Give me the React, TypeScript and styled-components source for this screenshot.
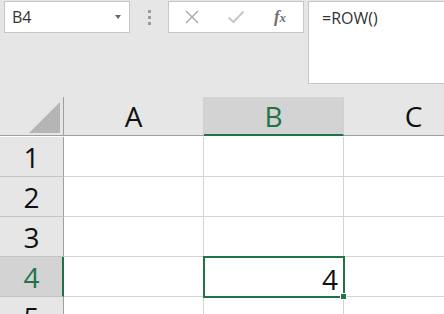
import styled, { createGlobalStyle } from 'styled-components';

const GREEN = '#217346';

const GlobalStyle = createGlobalStyle`
  html, body {
    margin: 0;
    padding: 0;
    background: #e6e6e6;
    overflow: hidden;
  }
  body {
    font-family: 'Open Sans', 'Noto Sans', sans-serif;
  }
`;

const columns = ['A', 'B', 'C'];
const rows = [1, 2, 3, 4, 5];
const activeCol = 'B';
const activeRow = 4;

export default function App() {
  return (
    <>
      <GlobalStyle />
      <Page>
        <Toolbar>
          <NameBox>
            <NameText>B4</NameText>
            <DropArrow />
          </NameBox>
          <Grip>
            <Dot />
            <Dot />
            <Dot />
          </Grip>
          <ActionBox>
            <ActionButton>
              <svg width="16" height="16" viewBox="0 0 16 16">
                <path d="M2 2L14 14M14 2L2 14" stroke="#a8a8a8" strokeWidth="1.4" fill="none" />
              </svg>
            </ActionButton>
            <ActionButton>
              <svg width="18" height="14" viewBox="0 0 18 14">
                <path d="M1.5 7.5L6.5 12L16.5 1.5" stroke="#c8c8c8" strokeWidth="2" fill="none" />
              </svg>
            </ActionButton>
            <ActionButton>
              <FxLabel>
                f<sub>x</sub>
              </FxLabel>
            </ActionButton>
          </ActionBox>
          <FormulaInput>=ROW()</FormulaInput>
        </Toolbar>
        <Sheet>
          <Corner>
            <svg width="31" height="31" viewBox="0 0 31 31">
              <polygon points="31,0 31,31 0,31" fill="#b5b5b5" />
            </svg>
          </Corner>
          {columns.map((c) => (
            <ColHeader key={c} $active={c === activeCol}>
              {c}
            </ColHeader>
          ))}
          {rows.map((r) => (
            <Row key={r} r={r} />
          ))}
        </Sheet>
      </Page>
    </>
  );
}

const Row = ({ r }: { r: number }) => (
  <>
    <RowHeader $active={r === activeRow}>{r}</RowHeader>
    {columns.map((c) => {
      const selected = r === activeRow && c === activeCol;
      return (
        <Cell key={c}>
          {selected && (
            <>
              <CellValue>4</CellValue>
              <Selection>
                <FillHandle />
              </Selection>
            </>
          )}
        </Cell>
      );
    })}
  </>
);

const Page = styled.div`
  width: 444px;
  height: 314px;
  overflow: hidden;
`;

const Toolbar = styled.div`
  display: flex;
  align-items: flex-start;
  height: 96px;
  padding: 1px 0 0 4px;
  box-sizing: border-box;
  width: 560px;
`;

const NameBox = styled.div`
  display: flex;
  align-items: center;
  justify-content: space-between;
  width: 126px;
  height: 32px;
  box-sizing: border-box;
  padding: 0 8px 0 7px;
  background: #fff;
  border: 1px solid #c6c6c6;
`;

const NameText = styled.span`
  font-size: 16px;
  color: #333;
`;

const DropArrow = styled.span`
  width: 0;
  height: 0;
  border-left: 3.5px solid transparent;
  border-right: 3.5px solid transparent;
  border-top: 4px solid #666;
`;

const Grip = styled.div`
  display: flex;
  flex-direction: column;
  gap: 3px;
  width: 38px;
  align-items: center;
  padding-top: 9px;
`;

const Dot = styled.span`
  width: 3px;
  height: 3px;
  background: #9c9c9c;
`;

const ActionBox = styled.div`
  display: flex;
  align-items: center;
  width: 136px;
  height: 32px;
  box-sizing: border-box;
  background: #fff;
  border: 1px solid #c6c6c6;
  padding-left: 13px;
  gap: 24px;
`;

const ActionButton = styled.div`
  display: flex;
  align-items: center;
  justify-content: center;
  width: 20px;
  height: 20px;
`;

const FxLabel = styled.span`
  font-family: 'Liberation Serif', 'DejaVu Serif', serif;
  font-style: italic;
  font-weight: bold;
  font-size: 17px;
  color: #6f6f6f;
  sub {
    font-size: 13px;
    vertical-align: baseline;
  }
`;

const FormulaInput = styled.div`
  margin-left: 4px;
  flex: 1;
  height: 83px;
  box-sizing: border-box;
  background: #fff;
  border: 1px solid #c6c6c6;
  padding: 5px 13px;
  font-size: 16px;
  color: #333;
`;

const Sheet = styled.div`
  display: grid;
  grid-template-columns: 64px 140px 140px 140px;
  grid-template-rows: 40px;
  grid-auto-rows: 40px;
  margin-top: 1px;
  background: #fff;
`;

const HeaderBase = styled.div`
  display: flex;
  align-items: center;
  justify-content: center;
  box-sizing: border-box;
  font-size: 28px;
  line-height: 1;
  background: #e6e6e6;
`;

const Corner = styled(HeaderBase)`
  align-items: flex-end;
  justify-content: flex-end;
  padding: 0 3px 2px 0;
  border-right: 1px solid #9f9f9f;
  border-bottom: 1px solid #9f9f9f;
  height: 39px;
`;

const ColHeader = styled(HeaderBase)<{ $active?: boolean }>`
  height: 39px;
  color: ${(p) => (p.$active ? GREEN : '#111')};
  background: ${(p) => (p.$active ? '#d3d3d3' : '#e6e6e6')};
  border-right: 1px solid #d0d0d0;
  border-bottom: ${(p) => (p.$active ? `2px solid ${GREEN}` : '1px solid #9f9f9f')};
  padding-top: ${(p) => (p.$active ? '1px' : '0')};
`;

const RowHeader = styled(HeaderBase)<{ $active?: boolean }>`
  color: ${(p) => (p.$active ? GREEN : '#111')};
  background: ${(p) => (p.$active ? '#d3d3d3' : '#e6e6e6')};
  border-right: ${(p) => (p.$active ? `2px solid ${GREEN}` : '1px solid #9f9f9f')};
  border-bottom: 1px solid #c4c4c4;
  padding-left: ${(p) => (p.$active ? '1px' : '0')};
`;

const Cell = styled.div`
  position: relative;
  display: flex;
  align-items: center;
  justify-content: flex-end;
  box-sizing: border-box;
  border-right: 1px solid #d4d4d4;
  border-bottom: 1px solid #d4d4d4;
  background: #fff;
`;

const CellValue = styled.span`
  font-size: 28px;
  line-height: 1;
  color: #111;
  padding: 5px 5px 0 0;
`;

const Selection = styled.div`
  position: absolute;
  z-index: 2;
  top: -1px;
  left: -1px;
  right: -2px;
  bottom: -2px;
  border: 2px solid ${GREEN};
  pointer-events: none;
`;

const FillHandle = styled.span`
  position: absolute;
  right: -4px;
  bottom: -4px;
  width: 5px;
  height: 5px;
  background: ${GREEN};
  border: 1px solid #fff;
`;
